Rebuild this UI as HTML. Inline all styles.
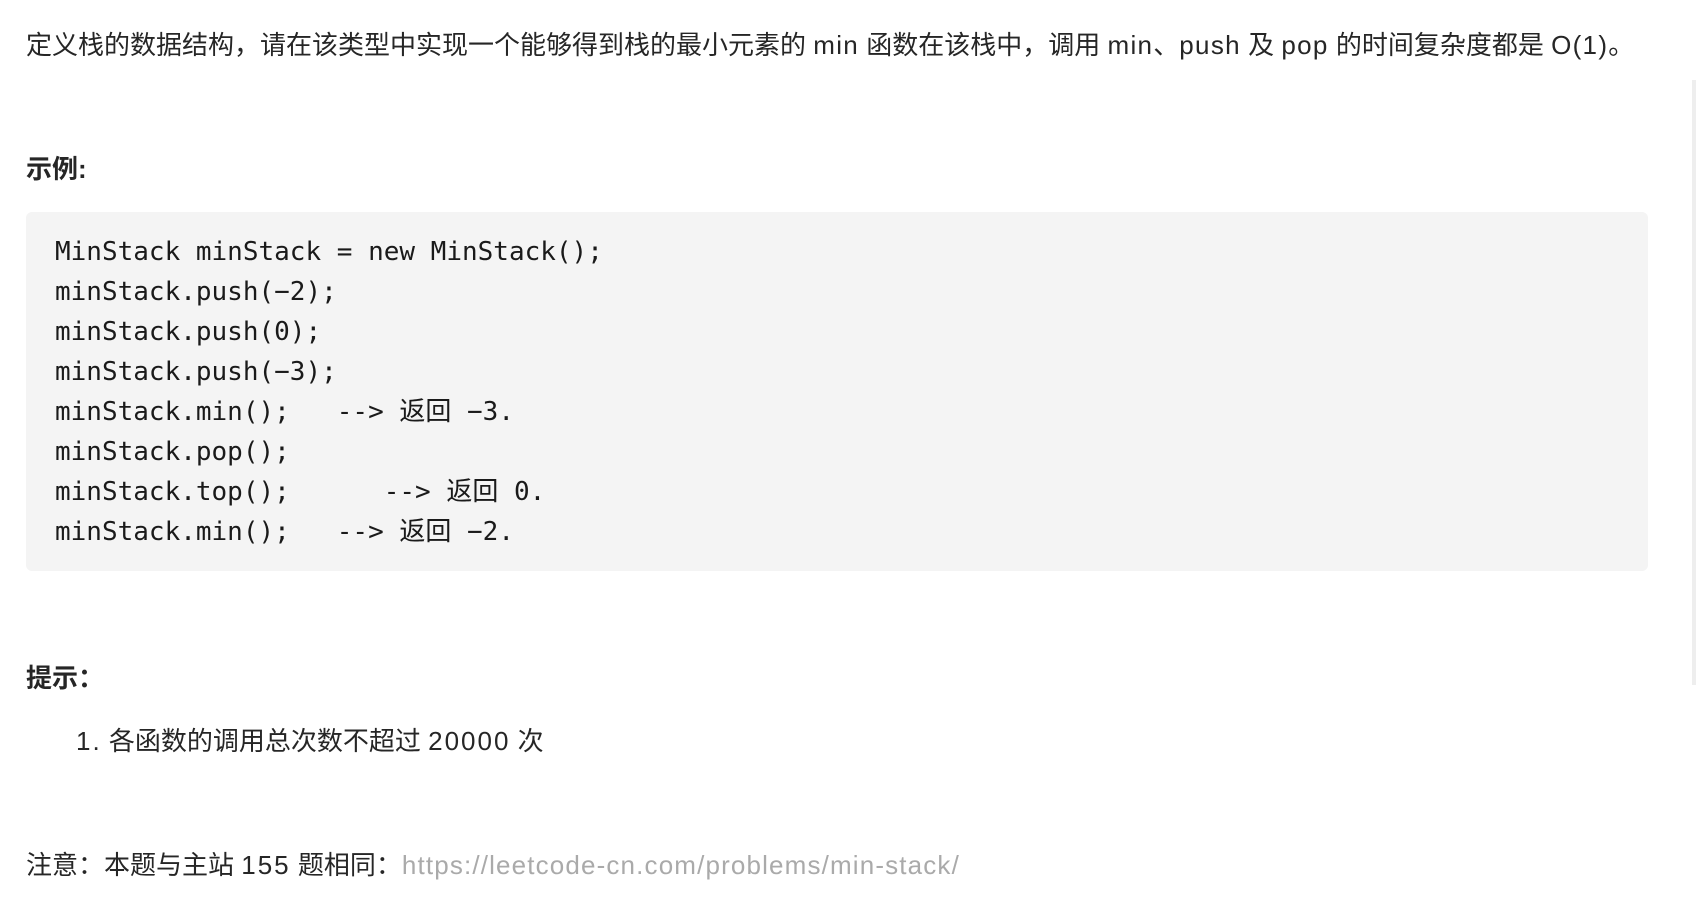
<!DOCTYPE html>
<html><head><meta charset="utf-8"><style>
html,body{margin:0;padding:0;background:#fff;width:1696px;height:914px;overflow:hidden}
body{font-family:"Liberation Sans","Noto Sans CJK SC",sans-serif;color:#262626;font-size:26px;position:relative}
.t{position:absolute;left:26px;white-space:nowrap;line-height:34px}
b{font-weight:bold}
.code{position:absolute;left:26px;top:212px;width:1622px;height:359px;background:#f4f4f4;border-radius:6px}
pre{margin:0;position:absolute;left:29px;top:20px;font-family:"DejaVu Sans Mono","Noto Sans CJK SC",monospace;font-size:26px;line-height:40px;color:#1a1a1a}
.sb{position:absolute;left:1692px;top:80px;width:4px;height:605px;background:#eee}
a{color:#aaa;text-decoration:none;letter-spacing:1.15px}
.l{letter-spacing:1.3px}
.n{letter-spacing:2px}
</style></head><body>
<div class="t" style="top:28px">定义栈的数据结构，请在该类型中实现一个能够得到栈的最小元素的 <span class="l">min</span> 函数在该栈中，调用 <span class="l">min</span>、<span class="l">push</span> 及 <span class="l">pop</span> 的时间复杂度都是 <span class="l">O(1)</span>。</div>
<div class="t" style="top:152px"><b>示例:</b></div>
<div class="code"><pre>MinStack minStack = new MinStack();
minStack.push(−2);
minStack.push(0);
minStack.push(−3);
minStack.min();   --&gt; 返回 −3.
minStack.pop();
minStack.top();      --&gt; 返回 0.
minStack.min();   --&gt; 返回 −2.</pre></div>
<div class="t" style="top:661px"><b>提示：</b></div>
<div class="t" style="top:724px;left:76px"><span class="n">1.</span> 各函数的调用总次数不超过 <span class="n">20000</span> 次</div>
<div class="t" style="top:848px">注意：本题与主站 <span class="n">155</span> 题相同：<a>https://leetcode-cn.com/problems/min-stack/</a></div>
<div class="sb"></div>
</body></html>
